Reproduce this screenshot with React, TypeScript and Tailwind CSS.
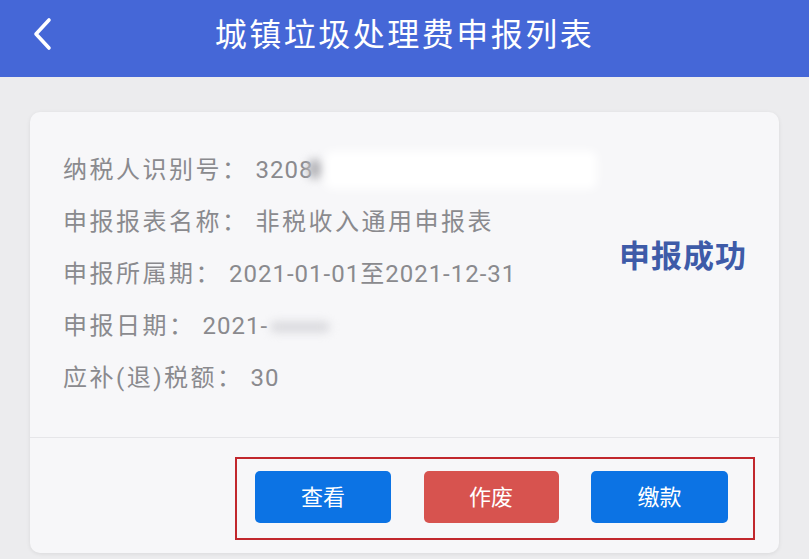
import React from "react";

const rows: { label: string; value: React.ReactNode }[] = [
  {
    label: "纳税人识别号：",
    value: (
      <span className="inline-flex items-center tracking-[1px]">
        3208
        <span className="relative inline-block w-[280px] h-[30px] align-middle">
          <span className="absolute left-[-6px] top-[4px] w-[16px] h-[20px] rounded-full bg-[#b9b9bd] blur-[4px]" />
          <span className="absolute left-[12px] top-[-4px] w-[272px] h-[38px] rounded-md bg-white blur-[5px]" />
        </span>
      </span>
    ),
  },
  { label: "申报报表名称：", value: "非税收入通用申报表" },
  {
    label: "申报所属期：",
    value: <span className="tracking-[1px]">2021-01-01至2021-12-31</span>,
  },
  {
    label: "申报日期：",
    value: (
      <span className="inline-flex items-center tracking-[1px]">
        2021-
        <span className="relative inline-block w-[70px] h-[26px] align-middle">
          <span className="absolute left-[2px] top-[8px] w-[60px] h-[12px] rounded-full bg-[#dcdce0] blur-[4px]" />
        </span>
      </span>
    ),
  },
  { label: "应补(退)税额：", value: <span className="tracking-[1px]">30</span> },
];

export default function App() {
  return (
    <div
      className="w-[809px] h-[559px] bg-[#ececee] overflow-hidden flex flex-col"
      style={{ fontFamily: 'Roboto, "Noto Sans CJK SC", sans-serif' }}
    >
      <header className="h-[77px] bg-[#4567d7] flex items-center relative shrink-0">
        <svg
          className="absolute left-[30px] top-[17px]"
          width="26"
          height="34"
          viewBox="0 0 26 34"
          fill="none"
        >
          <path
            d="M19 3 L6 17 L19 31"
            stroke="white"
            strokeWidth="3.6"
            strokeLinecap="round"
            strokeLinejoin="round"
          />
        </svg>
        <h1 className="flex-1 text-center text-white text-[32px] tracking-[2.5px] leading-none pb-[8px]">
          城镇垃圾处理费申报列表
        </h1>
      </header>
      <div className="px-[30px] pt-[35px] pb-[6px] flex-1 flex flex-col">
        <div className="flex-1 bg-[#f7f7f9] rounded-[10px] shadow-[0_1px_4px_rgba(0,0,0,0.08)] flex flex-col">
          <div className="flex items-center pt-[32px] pb-[33px] border-b border-[#e6e6e9]">
            <div className="flex-1 pl-[33px]">
              {rows.map((r) => (
                <div
                  key={r.label}
                  className="h-[52px] flex items-center text-[24px] text-[#8a8a8e] tracking-[2.5px] whitespace-nowrap"
                >
                  <span>{r.label}</span>
                  <span className="ml-[7px]">{r.value}</span>
                </div>
              ))}
            </div>
            <div className="w-[180px] pr-[32px] text-right text-[31px] font-bold text-[#3e5ba8] tracking-[1px] pb-[34px]">
              申报成功
            </div>
          </div>
          <div className="flex justify-end pr-[24px] pt-[19px]">
            <div className="w-[520px] h-[83px] border-2 border-[#c1272d] flex items-start justify-between pl-[18px] pr-[25px] pt-[12px]">
              <button className="w-[136px] h-[52px] rounded-[5px] bg-[#0c73e4] text-white text-[22px]">
                查看
              </button>
              <button className="w-[135px] h-[52px] rounded-[5px] bg-[#d7534f] text-white text-[22px]">
                作废
              </button>
              <button className="w-[137px] h-[52px] rounded-[5px] bg-[#0c73e4] text-white text-[22px]">
                缴款
              </button>
            </div>
          </div>
        </div>
      </div>
    </div>
  );
}
